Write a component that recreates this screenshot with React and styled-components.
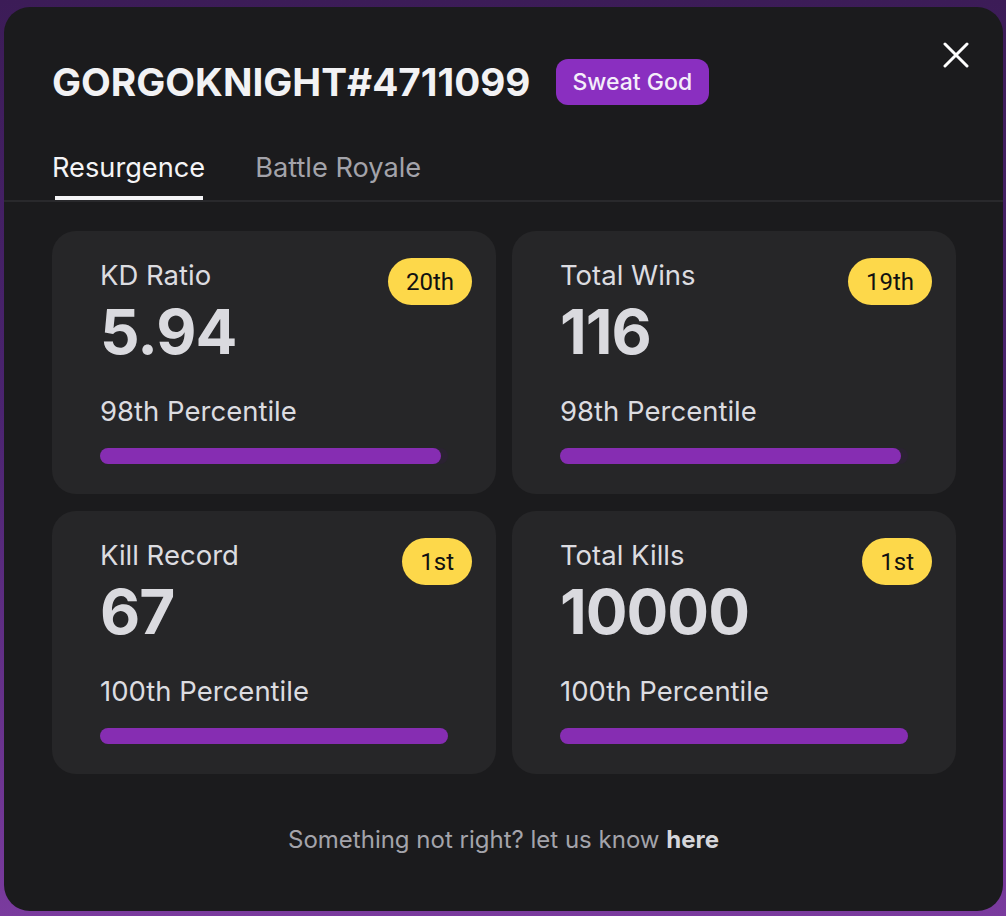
import React from 'react'
import styled, { createGlobalStyle } from 'styled-components'

const Global = createGlobalStyle`
  html, body {
    margin: 0;
    padding: 0;
  }
  body {
    font-family: Inter, "Noto Sans", sans-serif;
    background: linear-gradient(180deg, #3c1c57 0%, #4b2470 45%, #7a3b9e 100%);
    min-height: 916px;
  }
`

const stats = [
  { label: 'KD Ratio', value: '5.94', rank: '20th', pct: 98 },
  { label: 'Total Wins', value: '116', rank: '19th', pct: 98 },
  { label: 'Kill Record', value: '67', rank: '1st', pct: 100 },
  { label: 'Total Kills', value: '10000', rank: '1st', pct: 100 },
]

const App = () => {
  return (
    <Page>
      <Global />
      <Modal>
        <Close aria-label="close">
          <svg width="26" height="26" viewBox="0 0 26 26" fill="none">
            <path d="M2 2L24 24M24 2L2 24" stroke="#fff" strokeWidth="3" strokeLinecap="round" />
          </svg>
        </Close>
        <Header>
          <Title>GORGOKNIGHT#4711099</Title>
          <Tag>Sweat God</Tag>
        </Header>
        <Tabs>
          <Tab active>Resurgence</Tab>
          <Tab>Battle Royale</Tab>
        </Tabs>
        <Grid>
          {stats.map((s) => (
            <Card key={s.label}>
              <Rank>{s.rank}</Rank>
              <Label>{s.label}</Label>
              <Value>{s.value}</Value>
              <Percentile>{s.pct}th Percentile</Percentile>
              <Track>
                <Fill style={{ width: s.pct + '%' }} />
              </Track>
            </Card>
          ))}
        </Grid>
        <Footer>
          Something not right? let us know <b>here</b>
        </Footer>
      </Modal>
    </Page>
  )
}

export default App

const Page = styled.div`
    padding: 7px 3px 5px 4px;
    box-sizing: border-box;
    height: 916px;
`

const Modal = styled.div`
    position: relative;
    height: 904px;
    box-sizing: border-box;
    background-color: #1b1b1d;
    border-radius: 26px;
    padding-top: 52px;
`

const Close = styled.button`
    position: absolute;
    top: 28px;
    right: 27px;
    width: 40px;
    height: 40px;
    background: none;
    border: none;
    padding: 0;
    display: flex;
    align-items: center;
    justify-content: center;
    cursor: pointer;
`

const Header = styled.div`
    display: flex;
    align-items: center;
    gap: 25px;
    padding-left: 48px;
`

const Title = styled.h1`
    margin: 0;
    font-size: 38.7px;
    font-weight: 700;
    color: #f2f2f4;
    letter-spacing: 0;
`

const Tag = styled.span`
    background-color: #8a2fc0;
    color: #f4eefa;
    font-size: 23px;
    font-weight: 500;
    height: 46px;
    padding: 0 17px;
    border-radius: 12px;
    display: flex;
    align-items: center;
`

const Tabs = styled.div`
    display: flex;
    gap: 50px;
    padding-left: 48px;
    margin-top: 46px;
    border-bottom: 2px solid #29292c;
`

const Tab = styled.div`
    font-size: 27.2px;
    color: ${(p) => (p.active ? '#f4f4f6' : '#a3a3aa')};
    padding-bottom: 16px;
    position: relative;
    &::after {
        content: '';
        display: ${(p) => (p.active ? 'block' : 'none')};
        position: absolute;
        left: 3px;
        right: 2px;
        bottom: 0;
        height: 4px;
        background-color: #f4f4f6;
    }
`

const Grid = styled.div`
    display: grid;
    grid-template-columns: 1fr 1fr;
    gap: 17px 16px;
    padding: 29px 47px 0 48px;
`

const Card = styled.div`
    position: relative;
    height: 263px;
    box-sizing: border-box;
    background-color: #262628;
    border-radius: 24px;
    padding: 28px 48px 0 48px;
`

const Rank = styled.span`
    position: absolute;
    top: 27px;
    right: 24px;
    height: 47px;
    padding: 0 18px;
    border-radius: 24px;
    background-color: #fdd84a;
    color: #111;
    font-family: Roboto, Inter, sans-serif;
    font-size: 24px;
    display: flex;
    align-items: center;
`

const Label = styled.div`
    font-size: 27.5px;
    color: #dcdce0;
    line-height: 32px;
`

const Value = styled.div`
    font-size: 62px;
    font-weight: 700;
    color: #dadadf;
    line-height: 70px;
    margin-top: 6px;
    letter-spacing: -1px;
`

const Percentile = styled.div`
    font-size: 27.5px;
    color: #dcdce0;
    line-height: 32px;
    margin-top: 28px;
`

const Track = styled.div`
    margin-top: 21px;
    height: 16px;
    border-radius: 8px;
    background-color: #2b2232;
`

const Fill = styled.div`
    height: 100%;
    border-radius: 8px;
    background-color: #862db2;
`

const Footer = styled.div`
    text-align: center;
    margin-top: 51px;
    font-size: 24px;
    color: #a4a4ab;
    b {
        color: #d6d6da;
        font-weight: 700;
    }
`
